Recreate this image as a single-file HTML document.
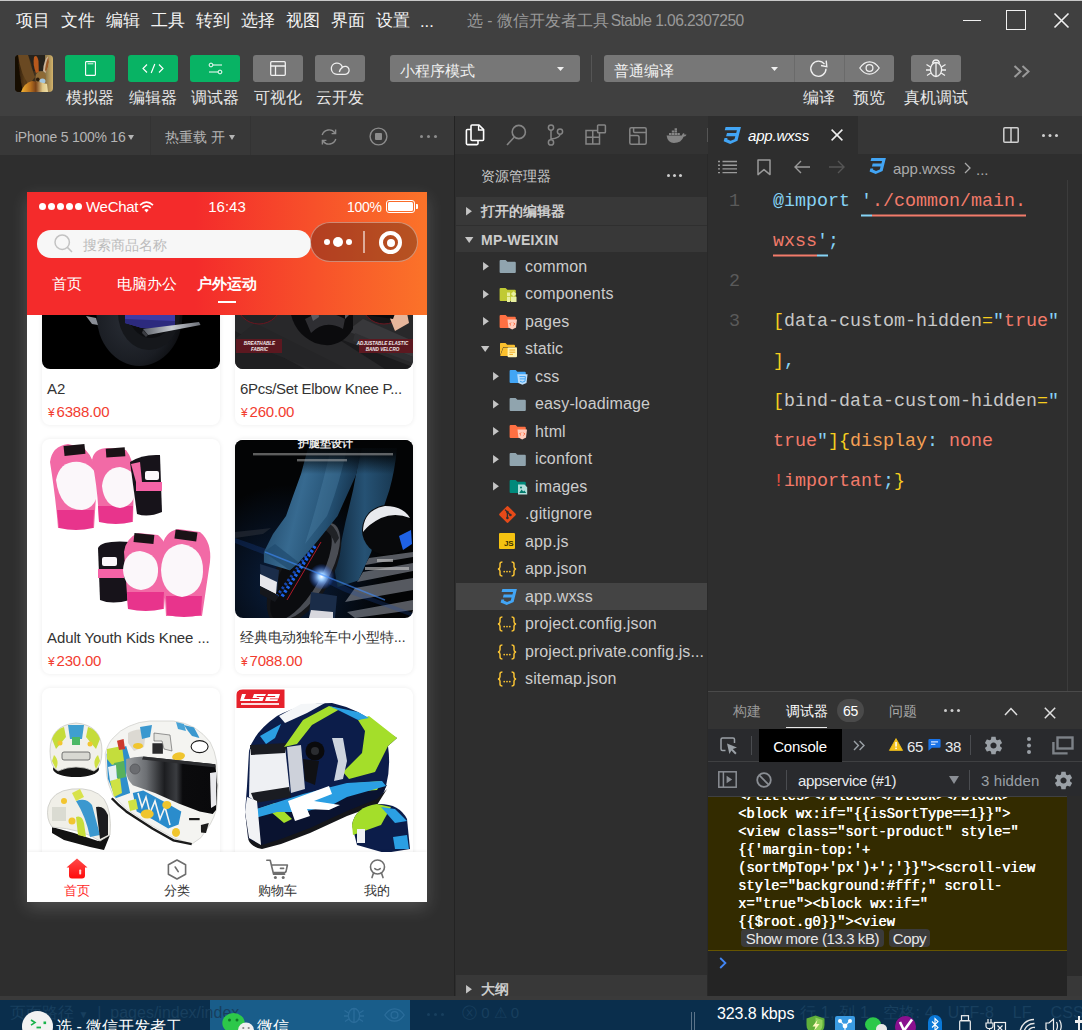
<!DOCTYPE html>
<html lang="zh">
<head>
<meta charset="utf-8">
<title>微信开发者工具</title>
<style>
*{box-sizing:border-box;margin:0;padding:0}
html,body{width:1082px;height:1030px;overflow:hidden;background:#2e2e2e}
body{font-family:"Liberation Sans",sans-serif;color:#ccc;position:relative;font-size:15px}
.a{position:absolute;white-space:nowrap}
.c{position:absolute;white-space:nowrap;transform:translate(-50%,-50%)}
.v{position:absolute;white-space:nowrap;transform:translateY(-50%)}
svg{display:block;overflow:visible}
/* top */
#top{left:0;top:0;width:1082px;height:116px;background:#404040}
#topline{left:0;top:0;width:1082px;height:1px;background:#c8c8c8}
.menu{font-size:16.5px;color:#f4f4f4;top:21px}
.tbtn{top:55px;width:50px;height:27px;border-radius:3px;background:#08b364}
.tbtn.g{background:#777}
.tlab{top:98px;font-size:15.5px;color:#e8e8e8}
.dd{top:55px;height:27px;background:#777;border-radius:3px}
/* sim */
#simbar{left:0;top:116px;width:454px;height:39px;background:#383838}
#simbg{left:0;top:155px;width:454px;height:845px;background:#2e2e2e}
#vline{left:454px;top:116px;width:1px;height:884px;background:#232323}
/* explorer */
#actbar{left:455px;top:116px;width:253px;height:38px;background:#333}
#expl{left:455px;top:154px;width:253px;height:846px;background:#2e2e2e}
.sec{left:456px;width:251px;height:27px;background:#383838}
.row{left:456px;width:251px;height:27px}
.fn{font-size:16px;color:#ccc;letter-spacing:.15px}
.bold{font-weight:bold;font-size:14px;color:#ccc}
/* editor */
#tabs{left:708px;top:116px;width:374px;height:38px;background:#363636}
#tab1{left:708px;top:116px;width:150px;height:38px;background:#2e2e2e}
#edit{left:708px;top:154px;width:374px;height:538px;background:#2e2e2e}
.code{font-family:"Liberation Mono",monospace;font-size:18.33px;left:773px;color:#c8c8c8;letter-spacing:0}
.ln{font-family:"Liberation Mono",monospace;font-size:18.33px;color:#5a5a5a;left:729px}
.b{color:#86d3f5}.s{color:#f27b6a}.y{color:#f6cd1e}.o{color:#f5a155}.r{color:#e4503f}
.u{border-bottom:2px solid #f27b6a;padding-bottom:3px}
.ub{border-bottom:2px solid #86d3f5;padding-bottom:3px}
/* debugger */
#dbg{left:708px;top:691px;width:374px;height:305px;background:#333;border-top:1px solid #4a4a4a}
#dt1{left:708px;top:729px;width:374px;height:33px;background:#292a2d;border-bottom:1px solid #3f4042}
#dt2{left:708px;top:762px;width:374px;height:34.7px;background:#292a2d;border-bottom:1px solid #3f4042}
#cons{left:708px;top:796.7px;width:359px;height:154.3px;background:#332b00;border-bottom:1px solid #665500;overflow:hidden}
#cons2{left:708px;top:951px;width:359px;height:45px;background:#242424}
#sb{left:1067px;top:796px;width:15px;height:200px;background:#2b2b2b}
.cl{font-family:"Liberation Mono",monospace;font-size:13.75px;color:#fff;left:30px;text-shadow:.45px 0 0 #fff}
/* taskbar */
#band{left:0;top:996px;width:1082px;height:4px;background:#3a3a3a}
#task{left:0;top:1000px;width:1082px;height:30px;background:#0a2e4c;overflow:hidden}
#taskact{left:210px;top:0;width:200px;height:30px;background:#195d8a}
.card{position:absolute;width:178px;height:234.5px;border-radius:8px;background:#fff;box-shadow:0 0 5px rgba(0,0,0,.08)}
.card svg{position:absolute;left:0;top:1px;border-radius:8px;overflow:hidden}
.ct{position:absolute;left:5px;top:198px;transform:translateY(-50%);font-size:15px;color:#333;white-space:nowrap;letter-spacing:-.1px}
.cp{position:absolute;left:6px;top:221px;transform:translateY(-50%);font-size:15px;color:#f23c2f;white-space:nowrap;letter-spacing:-.2px}
.cp i{font-style:normal;font-size:12px;margin-right:2px}
</style>
</head>
<body>
<!-- ============ TOP BAR ============ -->
<div class="a" id="top"></div>
<div class="a" id="topline"></div>
<div class="v menu" style="left:16px">项目</div>
<div class="v menu" style="left:61px">文件</div>
<div class="v menu" style="left:106px">编辑</div>
<div class="v menu" style="left:151px">工具</div>
<div class="v menu" style="left:196px">转到</div>
<div class="v menu" style="left:241px">选择</div>
<div class="v menu" style="left:286px">视图</div>
<div class="v menu" style="left:331px">界面</div>
<div class="v menu" style="left:376px">设置</div>
<div class="v menu" style="left:420px">...</div>
<div class="v" style="left:467px;top:21px;font-size:15.600px;color:#999">选 - 微信开发者工具 <span style="letter-spacing:-.58px;margin-left:-2.5px">Stable 1.06.2307250</span></div>
<!-- window controls -->
<div class="a" style="left:963px;top:19.500px;width:18px;height:1.500px;background:#f0f0f0"></div>
<div class="a" style="left:1006px;top:10px;width:20px;height:20px;border:1.600px solid #f0f0f0"></div>
<svg class="a" style="left:1054px;top:13px" width="15" height="15" viewBox="0 0 15 15"><path d="M0.5 0.5L14.5 14.5M14.5 0.5L0.5 14.5" stroke="#f0f0f0" stroke-width="1.6" fill="none"/></svg>

<!-- ============ TOOLBAR ============ -->
<!-- avatar -->
<svg class="a" style="left:15px;top:55px;border-radius:4px;overflow:hidden" width="38" height="37" viewBox="0 0 38 37">
<defs><linearGradient id="avg" x1="0" y1="0" x2="1" y2="0"><stop offset="0" stop-color="#1a0f06"/><stop offset=".25" stop-color="#5a3c18"/><stop offset=".5" stop-color="#3a2c1c"/><stop offset=".8" stop-color="#8a7448"/><stop offset="1" stop-color="#d4b46c"/></linearGradient>
<linearGradient id="avb" x1="0" y1="0" x2="1" y2="0"><stop offset="0" stop-color="#f2b232"/><stop offset=".35" stop-color="#b87020"/><stop offset=".55" stop-color="#7a4218"/><stop offset=".8" stop-color="#e0c888"/><stop offset="1" stop-color="#f0e0a8"/></linearGradient>
<filter id="avf"><feGaussianBlur stdDeviation=".7"/></filter></defs>
<rect width="38" height="37" fill="url(#avg)"/>
<g filter="url(#avf)">
<path d="M13 0H30V16H18Q17 8 13 0Z" fill="#26221f"/>
<path d="M3 0H13Q16 12 20 22L14 30Q6 20 3 0Z" fill="#6a4a22"/>
<path d="M0 0H3Q4 20 8 37H0Z" fill="#160c04"/>
<path d="M19 2Q22 -1 23.500 6L23.800 17L21 18Q17.500 10 19 2Z" fill="#b8581a"/>
<path d="M28 16Q29 4 33 1.500Q35 6 33 12L30.500 18Z" fill="#cbb498"/>
<path d="M30 15Q31 6 33.500 2Q34.500 6 33 12L31 17Z" fill="#9a5a28"/>
<path d="M20.500 22Q21 16.500 26 16.500Q31 17 31 23L30.500 29H21Z" fill="#8e6a36"/>
<ellipse cx="22.800" cy="24.500" rx="1.800" ry="2" fill="#2a1a0c"/>
<ellipse cx="27.500" cy="26" rx="3" ry="2.600" fill="#a4c6de"/>
<path d="M6 37Q9 28 17 26Q26 27 32 29L33 37Z" fill="url(#avb)"/>
</g></svg>
<!-- green buttons -->
<div class="a tbtn" style="left:65px"></div>
<div class="a tbtn" style="left:128px"></div>
<div class="a tbtn" style="left:190px"></div>
<div class="a tbtn g" style="left:253px"></div>
<div class="a tbtn g" style="left:315px"></div>
<!-- phone icon -->
<svg class="a" style="left:85px;top:61px" width="11" height="15" viewBox="0 0 11 15"><rect x=".6" y=".6" width="9.8" height="13.8" rx=".6" fill="none" stroke="#fff" stroke-width="1.1"/><path d="M2.600 2.800H8.400" stroke="#fff" stroke-width=".9"/></svg>
<!-- code icon -->
<svg class="a" style="left:142px;top:63px" width="22" height="11" viewBox="0 0 22 11"><path d="M5 1.5L1 5.5L5 9.5M17 1.5L21 5.5L17 9.5M12.8 1L9.2 10" stroke="#fff" stroke-width="1.15" fill="none"/></svg>
<!-- sliders icon -->
<svg class="a" style="left:208px;top:62px" width="15" height="13" viewBox="0 0 15 13"><circle cx="3" cy="3" r="1.900" fill="none" stroke="#fff" stroke-width="1"/><path d="M5 3H14" stroke="#fff" stroke-width="1"/><circle cx="12" cy="10" r="1.900" fill="none" stroke="#fff" stroke-width="1"/><path d="M1 10H10" stroke="#fff" stroke-width="1"/></svg>
<!-- layout icon -->
<svg class="a" style="left:270px;top:61px" width="16" height="15" viewBox="0 0 16 15"><rect x=".7" y=".7" width="14.6" height="13.6" rx="1" fill="none" stroke="#f0f0f0" stroke-width="1.3"/><path d="M1 5H15M5.5 5V14" stroke="#f0f0f0" stroke-width="1.3"/></svg>
<!-- cloud icon -->
<svg class="a" style="left:330px;top:62px" width="20" height="14" viewBox="0 0 20 14"><path d="M7 12.3A5.6 5.6 0 1 1 12.4 5.4A4 4 0 1 1 14.8 12.3Z" fill="none" stroke="#f0f0f0" stroke-width="1.3" stroke-linejoin="round" transform="translate(0,0)"/><path d="M12.4 5.4Q10 7 9.3 10" fill="none" stroke="#f0f0f0" stroke-width="1.3"/></svg>
<!-- labels -->
<div class="c tlab" style="left:90px">模拟器</div>
<div class="c tlab" style="left:153px">编辑器</div>
<div class="c tlab" style="left:215px">调试器</div>
<div class="c tlab" style="left:278px">可视化</div>
<div class="c tlab" style="left:340px">云开发</div>
<!-- dropdown 1 -->
<div class="a dd" style="left:390px;width:190px"></div>
<div class="v" style="left:400px;top:71px;font-size:15px;color:#f0f0f0">小程序模式</div>
<svg class="a" style="left:557px;top:66.500px" width="7" height="4" viewBox="0 0 9 5"><path d="M0 0H9L4.5 5Z" fill="#f0f0f0"/></svg>
<div class="a" style="left:591px;top:55px;width:1px;height:27px;background:#555"></div>
<!-- dropdown 2 + compile/preview -->
<div class="a dd" style="left:604px;width:290px"></div>
<div class="a" style="left:794px;top:55px;width:1px;height:27px;background:#6a6a6a"></div>
<div class="a" style="left:844px;top:55px;width:1px;height:27px;background:#6a6a6a"></div>
<div class="v" style="left:614px;top:71px;font-size:15px;color:#f0f0f0">普通编译</div>
<svg class="a" style="left:771px;top:66.500px" width="7" height="4" viewBox="0 0 9 5"><path d="M0 0H9L4.5 5Z" fill="#f0f0f0"/></svg>
<!-- refresh -->
<svg class="a" style="left:809px;top:59px" width="20" height="19" viewBox="0 0 20 19"><path d="M15.5 5.2A7.6 7.6 0 1 0 17 9.8" fill="none" stroke="#f0f0f0" stroke-width="1.4"/><path d="M12 6.5L17.8 7.6L17.2 1.6" fill="none" stroke="#f0f0f0" stroke-width="1.4"/></svg>
<!-- eye -->
<svg class="a" style="left:859px;top:61px" width="21" height="14" viewBox="0 0 21 14"><path d="M.8 7Q5 .8 10.5 .8T20.2 7Q16 13.2 10.5 13.2T.8 7Z" fill="none" stroke="#f0f0f0" stroke-width="1.3"/><circle cx="10.5" cy="7" r="3.4" fill="none" stroke="#f0f0f0" stroke-width="1.3"/></svg>
<!-- bug -->
<div class="a tbtn g" style="left:911px"></div>
<svg class="a" style="left:925px;top:59px" width="22" height="19" viewBox="0 0 22 19"><ellipse cx="11" cy="10.5" rx="5.6" ry="7" fill="none" stroke="#f0f0f0" stroke-width="1.3"/><path d="M11 3.5V17.5M7.5 4.5Q8 1 11 1T14.5 4.5M5.5 8L1.5 5.5M5.4 11H1M5.8 14L2 16.5M16.5 8L20.5 5.5M16.6 11H21M16.2 14L20 16.5" fill="none" stroke="#f0f0f0" stroke-width="1.3"/></svg>
<div class="c tlab" style="left:819px">编译</div>
<div class="c tlab" style="left:869px">预览</div>
<div class="c tlab" style="left:936px">真机调试</div>
<svg class="a" style="left:1013px;top:65px" width="18" height="13" viewBox="0 0 18 13"><path d="M1.5 1L7.5 6.5L1.5 12M9.5 1L15.5 6.5L9.5 12" fill="none" stroke="#9a9a9a" stroke-width="2"/></svg>


<!-- ============ SIM BAR ============ -->
<div class="a" id="simbar"></div>
<div class="a" id="simbg"></div>
<div class="a" id="vline"></div>
<div class="a" style="left:150px;top:116px;width:1px;height:39px;background:#333"></div>
<div class="a" style="left:250px;top:116px;width:1px;height:39px;background:#333"></div>
<div class="v" style="left:15px;top:137px;font-size:14px;color:#b4b4b4;letter-spacing:-.25px">iPhone 5 100% 16</div>
<svg class="a" style="left:128px;top:134.500px" width="6" height="5" viewBox="0 0 6 5"><path d="M0 0H6L3 5Z" fill="#b4b4b4"/></svg>
<div class="v" style="left:165px;top:138px;font-size:14px;color:#b4b4b4">热重载 开</div>
<svg class="a" style="left:229px;top:134.500px" width="6" height="5" viewBox="0 0 6 5"><path d="M0 0H6L3 5Z" fill="#b4b4b4"/></svg>
<!-- refresh -->
<svg class="a" style="left:320px;top:128px" width="18" height="18" viewBox="0 0 18 18"><path d="M2.2 7A7.2 7.2 0 0 1 15 5M15.8 11A7.2 7.2 0 0 1 3 13" fill="none" stroke="#8c8c8c" stroke-width="1.4"/><path d="M15.6 1.5V5.6H11.6M2.4 16.5V12.4H6.4" fill="none" stroke="#8c8c8c" stroke-width="1.4"/></svg>
<!-- stop -->
<svg class="a" style="left:369px;top:127px" width="19" height="19" viewBox="0 0 19 19"><circle cx="9.5" cy="9.5" r="8.4" fill="none" stroke="#8c8c8c" stroke-width="1.4"/><rect x="6" y="6" width="7" height="7" rx="1" fill="#8c8c8c"/></svg>
<div class="a" style="left:420px;top:135px;width:3px;height:3px;border-radius:2px;background:#8c8c8c;box-shadow:7px 0 0 #8c8c8c,14px 0 0 #8c8c8c"></div>


<!-- ============ PHONE ============ -->
<div class="a" id="phone" style="left:27px;top:192px;width:400px;height:710px;background:#fff;overflow:hidden;box-shadow:0 6px 16px rgba(255,255,255,.17)">
<!-- product cards (under header) -->
<!-- card 1 : A2 unicycle -->
<div class="card" style="left:15px;top:-2px">
<svg width="178" height="178" viewBox="0 0 178 178"><defs>
<radialGradient id="w1" cx=".4" cy=".55" r=".6"><stop offset="0" stop-color="#2a2e36"/><stop offset=".7" stop-color="#1a1d23"/><stop offset="1" stop-color="#0c0d10"/></radialGradient>
<linearGradient id="pd" x1="0" y1="0" x2="1" y2="0"><stop offset="0" stop-color="#5a5e66"/><stop offset=".5" stop-color="#c8ccd2"/><stop offset="1" stop-color="#6a6e76"/></linearGradient></defs>
<rect width="178" height="178" fill="#000"/>
<ellipse cx="97.500" cy="124" rx="43" ry="51" fill="url(#w1)"/>
<ellipse cx="107" cy="122" rx="31" ry="37" fill="#15171b"/>
<ellipse cx="109" cy="120" rx="23" ry="27" fill="#0d0e11"/>
<ellipse cx="110" cy="118" rx="18" ry="21" fill="#1b1d22"/>
<path d="M83 60H133V134Q120 138 100 137L83 132Z" fill="#3e3ba6"/>
<path d="M83 128L133 130V134Q120 138 100 137L83 132Z" fill="#2c2a7e"/>
<path d="M101 138L157 131L158.500 134L106 144Z" fill="url(#pd)"/>
<path d="M101 139L106 144L104 146L100 142Z" fill="#3a3c42"/>
<path d="M44 125L54 127L56 134L50 133Z" fill="#8a8e96"/>
</svg>
<div class="ct">A2</div><div class="cp"><i>¥</i>6388.00</div></div>
<!-- card 2 : pads dark -->
<div class="card" style="left:208px;top:-2px">
<svg width="178" height="178" viewBox="0 0 178 178"><rect width="178" height="178" fill="#28282a"/>
<path d="M0 140L70 178H0Z" fill="#1f1f21"/><path d="M20 132L112 178H78L0 148Z" fill="#252527"/>
<path d="M100 146L178 176V178H150Z" fill="#1b1b1d"/><path d="M112 140L178 166V150L128 128Z" fill="#38383b"/>
<path d="M118 150L178 172V166L120 142Z" fill="#2f2f32"/>
<circle cx="24" cy="110" r="23" fill="#222224" stroke="#6a1620" stroke-width="1"/>
<path d="M8 100Q24 92 40 100L36 112Q24 106 12 112Z" fill="#4a4a4e"/>
<circle cx="149" cy="110" r="23" fill="#141416" stroke="#6a1620" stroke-width="1"/>
<path d="M152 120L170 112L174 132L160 140Z" fill="#e6b69c"/>
<path d="M130 108L164 112L158 128L132 124Z" fill="#0a0a0c"/>
<path d="M55 90H118V138Q104 160 80 152Q58 142 55 118Z" fill="#0b0b0d"/>
<path d="M70 128Q90 116 110 128L108 138Q90 128 76 142Z" fill="#2e2e32"/>
<path d="M74 118L82 112L84 126L78 130Z" fill="#5a5a60"/><path d="M110 112L114 124L110 128Z" fill="#5a5a60"/>
<rect x="1" y="148" width="46" height="14" fill="#5c1820"/><text x="24.500" y="154.200" text-anchor="middle" font-family="Liberation Sans, sans-serif" font-size="4.600" font-weight="bold" font-style="italic" fill="#f2ecec">BREATHABLE</text><text x="24.500" y="159.800" text-anchor="middle" font-family="Liberation Sans, sans-serif" font-size="4.600" font-weight="bold" font-style="italic" fill="#f2ecec">FABRIC</text>
<rect x="124" y="148" width="54" height="14" fill="#5c1820"/><text x="147.500" y="154.200" text-anchor="middle" font-family="Liberation Sans, sans-serif" font-size="4.600" font-weight="bold" font-style="italic" fill="#f2ecec">ADJUSTABLE ELASTIC</text><text x="147.500" y="159.800" text-anchor="middle" font-family="Liberation Sans, sans-serif" font-size="4.600" font-weight="bold" font-style="italic" fill="#f2ecec">BAND VELCRO</text>
</svg>
<div class="ct" style="letter-spacing:-.3px">6Pcs/Set Elbow Knee P...</div><div class="cp"><i>¥</i>260.00</div></div>
<!-- card 3 : pink pads -->
<div class="card" style="left:15px;top:247px">
<svg width="178" height="178" viewBox="0 0 178 178"><rect width="178" height="178" fill="#fff"/>
<g>
<!-- top row -->
<path d="M8 22Q10 6 26 4L42 8Q54 20 55 40L52 88H16Q14 60 8 22Z" fill="#f26aa6"/>
<path d="M15 70H52L51 88Q34 92 17 88Z" fill="#e8348c"/>
<rect x="22" y="5" width="21" height="10" fill="#1a1216" transform="rotate(-6 32 10)"/>
<path d="M14 40Q18 20 38 22Q56 26 56 46Q56 68 40 70Q18 70 14 40Z" fill="#fbf7fa"/>
<path d="M50 20Q52 8 66 8L84 10Q92 20 92 36L91 82H57Q56 50 50 20Z" fill="#f26aa6"/>
<path d="M56 66H91L90 82Q74 86 57 82Z" fill="#e8348c"/>
<rect x="64" y="8" width="19" height="9" fill="#1a1216" transform="rotate(-4 73 12)"/>
<path d="M60 46Q62 28 78 27Q95 30 94 48Q93 66 78 68Q62 66 60 46Z" fill="#fbf7fa"/>
<path d="M88 22Q100 14 118 15L120 72Q106 78 95 74Z" fill="#17131a"/>
<rect x="94" y="42" width="26" height="9" fill="#f562a6"/><rect x="103" y="31" width="14" height="9" rx="2" fill="#fbf7fa"/>
<path d="M89 24L98 22L100 42L94 42Z" fill="#f26aa6"/>
<!-- bottom row -->
<path d="M56 108Q60 100 88 102L88 160Q70 165 58 160Z" fill="#17131a"/>
<rect x="56" y="129" width="26" height="9" fill="#f562a6"/><rect x="60" y="117" width="15" height="9" rx="2" fill="#fbf7fa"/>
<path d="M82 112Q84 98 96 93L116 95Q127 104 126 122L122 169H86Q84 140 82 112Z" fill="#f26aa6"/>
<path d="M85 152H122L121 169Q104 173 86 169Z" fill="#e8348c"/>
<rect x="92" y="94" width="20" height="9" fill="#1a1216" transform="rotate(6 102 98)"/>
<path d="M81 130Q82 112 98 111Q117 114 116 132Q115 148 99 150Q82 148 81 130Z" fill="#fbf7fa"/>
<path d="M120 108Q122 92 136 89L158 92Q170 102 168 122L160 176H124Q122 140 120 108Z" fill="#f26aa6"/>
<path d="M124 156H160L159 175Q142 179 125 175Z" fill="#e8348c"/>
<rect x="133" y="91" width="22" height="9" fill="#1a1216" transform="rotate(8 144 95)"/>
<path d="M119 130Q120 106 140 104Q162 108 161 132Q160 154 140 157Q120 154 119 130Z" fill="#fbf7fa"/>
</g></svg>
<div class="ct">Adult Youth Kids Knee ...</div><div class="cp"><i>¥</i>230.00</div></div>
<!-- card 4 : jeans + wheel -->
<div class="card" style="left:208px;top:247px">
<svg width="178" height="178" viewBox="0 0 178 178">
<defs><linearGradient id="jn" x1="0" y1="0" x2="1" y2=".3"><stop offset="0" stop-color="#183a58"/><stop offset=".45" stop-color="#376a90"/><stop offset=".75" stop-color="#245072"/><stop offset="1" stop-color="#122c44"/></linearGradient>
<linearGradient id="jn2" x1="0" y1="0" x2="1" y2="0"><stop offset="0" stop-color="#10283e"/><stop offset=".5" stop-color="#265274"/><stop offset="1" stop-color="#17364f"/></linearGradient>
<linearGradient id="tf" x1="0" y1="0" x2="0" y2="1"><stop offset="0" stop-color="#030405"/><stop offset=".35" stop-color="#030405" stop-opacity=".92"/><stop offset="1" stop-color="#030405" stop-opacity="0"/></linearGradient><radialGradient id="gl"><stop offset="0" stop-color="#fff"/><stop offset=".25" stop-color="#9fd0ff"/><stop offset="1" stop-color="#1a5cff" stop-opacity="0"/></radialGradient>
<radialGradient id="gb" cx=".3" cy=".8" r=".55"><stop offset="0" stop-color="#0a1f3f"/><stop offset="1" stop-color="#030405"/></radialGradient></defs>
<rect width="178" height="178" fill="url(#gb)"/>
<!-- crosswalk -->
<path d="M134 118L178 112V117L130 125ZM128 132L178 123V131L122 142ZM120 148L178 138V150L110 162ZM112 172L178 160V170L120 178Z" fill="#8e929c" opacity=".6"/>
<path d="M0 92L36 88L28 94L0 98Z" fill="#2a2e38" opacity=".6"/>
<path d="M0 98L60 119L120 151L178 173V177L110 152L50 123L0 103Z" fill="#1a4aa8" opacity=".25"/>
<!-- back leg -->
<path d="M126 8H162Q160 30 154.400 50L141.400 88.800L136.300 112.100L123.300 140.600L102.600 147L97.400 117.300L105.200 106.900L110.400 82.300L118.100 50Z" fill="url(#jn2)"/>
<!-- wheel -->
<ellipse cx="69" cy="133" rx="27" ry="58" fill="#141518" transform="rotate(30 69 133)"/>
<ellipse cx="72" cy="131" rx="22" ry="54" fill="#4a4d54" transform="rotate(30 72 131)"/>
<ellipse cx="66" cy="134" rx="19" ry="52" fill="#0b0c0f" transform="rotate(30 66 134)"/>
<path d="M86 102L52 160" stroke="#b01828" stroke-width="1"/>
<path d="M80 106L46 158" stroke="#1e6cff" stroke-width="3.500" stroke-dasharray="2.600 2.200" opacity=".9"/>
<path d="M74 112L42 156" stroke="#1a58e0" stroke-width="3" stroke-dasharray="2.400 2.400" opacity=".75"/>
<path d="M90 82Q100 84 104 98L100 104Q96 92 86 88Z" fill="#202226"/>
<!-- front leg -->
<path d="M73 8H127L121 35L114.300 50L102.600 75.900L92.300 88.800L81.900 101.700L63.800 122.400L54.800 130.200L28.900 122.400V112L38 94L51 76L58 56L66 34Z" fill="url(#jn)"/>
<path d="M96 8H112Q104 46 92 76L70 104Q84 60 96 8Z" fill="#4f86ad" opacity=".35"/>
<path d="M28.900 112L54.800 130.200L63.800 122.400L40 104Z" fill="#1f4a6e" opacity=".7"/>
<!-- shoes -->
<path d="M25 124L44 130L42 152L26 146Z" fill="#1b2d4a"/>
<path d="M25 134L42 142L41 154L25 146Z" fill="#e6e6ea"/>
<path d="M25 146L44 156L40 162L25 154Z" fill="#15171c"/>
<path d="M76 152L102 156L100 178H74Z" fill="#1a2c48"/><path d="M76 170L98 172L98 178H74Z" fill="#d8d8de"/>
<!-- glow -->
<circle cx="86.500" cy="136.700" r="13" fill="url(#gl)"/>
<path d="M30 112L150 160" stroke="#3f8dff" stroke-width="1.400" opacity=".6"/>
<rect x="0" y="0" width="178" height="34" fill="url(#tf)"/>
<!-- inset circle -->
<circle cx="152" cy="90" r="25" fill="#08090b"/>
<path d="M128 92Q128 70 150 66Q168 66 175 78Q160 72 146 78Q134 84 128 92Z" fill="#e8eaee"/>
<path d="M164 96L176 90L177 104L168 110Z" fill="#1f62e6"/>
<!-- caption text -->
<text x="90.500" y="6.500" text-anchor="middle" font-family="Liberation Sans, sans-serif" font-size="11" font-weight="bold" fill="#ececec">护腿垫设计</text>
<rect x="18" y="13" width="140" height="2.400" fill="#b8b8b8" opacity=".5"/><rect x="62" y="19" width="50" height="2.400" fill="#b8b8b8" opacity=".5"/>
<rect x="142" y="119" width="16" height="3" fill="#ccc" opacity=".6"/><rect x="130" y="127" width="44" height="3" fill="#ccc" opacity=".6"/>
</svg>
<div class="ct" style="font-size:13.75px;letter-spacing:0;top:199px">经典电动独轮车中小型特...</div><div class="cp"><i>¥</i>7088.00</div></div>
<!-- card 5 : cartoon helmets -->
<div class="card" style="left:15px;top:496.3px">
<svg width="178" height="178" viewBox="0 0 178 178"><rect width="178" height="178" fill="#fff"/>
<!-- small helmet top-left -->
<ellipse cx="34" cy="80" rx="23" ry="8" fill="#141414"/>
<path d="M8 62Q8 36 34 34Q60 36 60 62Q60 78 52 82Q34 74 16 82Q8 78 8 62Z" fill="#f1f0ea" stroke="#c9c9c4" stroke-width=".8"/>
<path d="M10 50Q14 40 22 38L24 48L14 60ZM58 50Q54 40 46 38L44 48L54 60Z" fill="#c5dc3a"/>
<path d="M26 36H42L40 50H28Z" fill="#3f9fd0"/><path d="M30 48H38V56H30Z" fill="#4cb866"/>
<path d="M12 66Q18 72 14 80L10 72ZM56 66Q50 72 54 80L58 72Z" fill="#cfe043"/>
<rect x="20" y="63" width="28" height="8" rx="2" fill="#d8d8d2" stroke="#555" stroke-width=".8"/>
<circle cx="18" cy="54" r="2.5" fill="#f2c530"/><circle cx="48" cy="55" r="2.5" fill="#f2c530"/>
<!-- small helmet bottom-left -->
<path d="M10 138L32 144L56 152L68 146L62 161L48 158L22 151L10 144Z" fill="#121212"/>
<path d="M6 118Q10 102 30 100Q52 98 62 110Q70 122 68 146L58 152Q40 140 10 138Q4 130 6 118Z" fill="#f0efe8" stroke="#c9c9c4" stroke-width=".8"/>
<path d="M34 112Q44 108 50 116L58 146L48 148Q44 128 34 112Z" fill="#3b98cf"/>
<path d="M34 128Q40 126 42 134L44 148L36 146Z" fill="#c8de3a"/>
<path d="M30 104L38 100L42 108L34 112Z" fill="#d8e24a"/>
<path d="M54 118Q62 116 66 126L66 146L58 150Z" fill="#1c1c1e"/>
<circle cx="22" cy="112" r="3" fill="#f2c530"/><circle cx="30" cy="132" r="3.5" fill="#f2c530"/>
<rect x="10" y="118" width="14" height="14" fill="#d5d6cc" opacity=".8"/>
<!-- big helmet -->
<defs><linearGradient id="vs" x1="0" y1="0" x2="1" y2="0"><stop offset="0" stop-color="#9a9da0"/><stop offset=".22" stop-color="#6c6f73"/><stop offset=".42" stop-color="#1c1d20"/><stop offset=".55" stop-color="#3a3c40"/><stop offset=".62" stop-color="#0b0b0d"/><stop offset="1" stop-color="#09090b"/></linearGradient></defs>
<path d="M63.200 64.800Q66 54 71.100 49Q78 41 86.800 37.300Q97 32.500 107.800 32H131.400Q143 33.500 152.400 38.600Q162 45 168.100 53Q173 62 174.600 72.600L176 96.200L174.600 119.800Q172 129 168.100 135.500L158.900 148.700L149.700 155.200L131.400 148.700L107.800 135.500L84.200 119.800L71.100 106.700Q66 96 64.600 85.700Z" fill="#f4f4f1" stroke="#d2d2ce" stroke-width=".8"/>
<path d="M69.800 109.300Q76 116 84.200 122.400L110.400 139.500L131.400 151.300L149.700 155.200" fill="none" stroke="#1b1b1b" stroke-width="2.400"/>
<!-- left graphics -->
<path d="M64.600 64.800L84.200 56.900L88.100 70L84.200 85.700L88.100 104.100L73.700 109.300L65.900 89.700Z" fill="#2f8fcb"/>
<path d="M65 60L80 57L82 72L70 76L65 70Z" fill="#c4dd3c"/><path d="M68 92L78 88L80 104L72 108Z" fill="#cfe244"/><path d="M72 74L82 72L84 88L76 90Z" fill="#58b15c"/>
<path d="M75 51.700L81.600 50L83 60L77 61Z" fill="#cc3a2e"/>
<path d="M66 78L74 76L75 90L68 92Z" fill="#e8f0f4"/>
<!-- lower blue WWW -->
<path d="M90.800 104.100L101.300 101.500L120.900 112L139.300 122.400L136.600 135.500L126.200 139.500L110.400 130.300L94.700 122.400Z" fill="#2a8ccc"/>
<path d="M96 104L100 118L104 108L108 124L113 112L118 130L123 118L128 136" fill="none" stroke="#f4f4f1" stroke-width="1.600"/>
<path d="M86 112L94 110L96 120L88 122Z" fill="#cfe244"/>
<!-- top graphics -->
<path d="M86 44Q96 38 104 42L102 58L92 62L86 54Z" fill="#dcd9d2"/><path d="M98 38L110 36L108 48L100 50Z" fill="#3b98cf"/>
<path d="M110.400 54.300H120.900V64.800H110.400Z" fill="#2a2a2c"/><path d="M112 44L128 46L130 62L122 60L120 52L112 52Z" fill="#e4e4e0" stroke="#555" stroke-width=".6"/>
<path d="M141.900 36L152 38.600L157.600 49L150 47L146 42Z" fill="#3b98cf"/><path d="M134 33L142 35L144 42L136 40Z" fill="#49a3d6"/>
<ellipse cx="157.600" cy="57.600" rx="8.500" ry="6" fill="#fff" stroke="#1a1a1a" stroke-width="1.100"/>
<ellipse cx="136.600" cy="67.400" rx="6.500" ry="4" fill="#f0c52e" transform="rotate(-12 136.600 67.400)"/>
<ellipse cx="96" cy="56.900" rx="5" ry="3" fill="#f0c52e"/>
<ellipse cx="105.200" cy="125" rx="6.500" ry="4.500" fill="#f0c52e"/><ellipse cx="124.800" cy="115.900" rx="4.500" ry="4" fill="#f0c52e"/><ellipse cx="134" cy="143.400" rx="4" ry="4.500" fill="#f0c52e"/>
<!-- visor -->
<path d="M84.200 70Q92 67.600 101.300 67.400L173.300 75.300L175.300 96.200L174 121.100L170.700 125.100L157.600 122.400L136.600 114.600L113 104.100L90.800 96.200Q84.500 90 84.200 83.100Z" fill="url(#vs)"/>
<path d="M101.300 67.400L173.300 75.300L173.600 78.500L100 70.500Z" fill="#2c2d30"/>
<path d="M168 84L174.500 83L174 116L169 119Z" fill="#e9e9ec"/>
<circle cx="93" cy="80" r="5" fill="#6a6c70" stroke="#55575b" stroke-width=".8"/>
<rect x="147.100" y="129" width="10.500" height="2.200" fill="#1b1b1b"/><path d="M158.900 136L166.800 134L164 144L159 143.400Z" fill="#1b1b1b"/>
</svg>
</div>
<!-- card 6 : LS2 helmet -->
<div class="card" style="left:208px;top:496.3px">
<svg width="178" height="178" viewBox="0 0 178 178"><rect width="178" height="178" fill="#fff"/>
<!-- main helmet -->
<path d="M14 62Q18 44 42 27Q66 14 97 14Q124 20 142 36L162 49L153 57Q156 78 151 97Q148 108 142 112L112 123L75 140L46 151L27 156Q16 154 14 149L10 123L12 97Z" fill="#0c1d4a"/>
<path d="M10 123L142 98L152 96L142 114L112 125L75 142L46 153L27 158Q16 156 13 149Z" fill="#0a1330"/><path d="M152 100L142 116L112 127L75 144L46 155L27 160Q16 158 13 150L27 156L46 150L75 139L112 122L142 110Z" fill="#15161a"/>
<!-- visor opening -->
<path d="M15 60L50 57L55 104L20 112L14 108Z" fill="#eef0f3"/>
<path d="M15 56L52 54L50 64L16 66Z" fill="#1a1c22"/>
<path d="M16 104L54 98L56 108L20 114Z" fill="#1a1c22"/>
<!-- lime shapes -->
<path d="M49 58L68 31L94 17L105 20L77 36L62 55Z" fill="#a6df2c"/>
<path d="M123 31L134 27L162 49L153 57L140 83L114 90L108 83L127 64L130 42Z" fill="#a4de2a"/>
<path d="M121 94L147 92L142 101L114 103Z" fill="#a4de2a"/>
<path d="M20 121L40 114L57 130L49 134L36 123L22 127Z" fill="#a4de2a"/>
<!-- blue shapes -->
<path d="M94 17L123 23L134 29L123 31L105 22Z" fill="#2b9fe3"/>
<path d="M25 47L46 35L40 49L31 55Z" fill="#2b9fe3"/>
<path d="M18 121L68 105L112 94L147 92L151 97L112 108L97 116L68 123L42 123L20 129Z" fill="#2b9fe3"/>
<!-- white top + R -->
<path d="M44 27L66 15L90 14L72 24L50 34Z" fill="#f4f6f8"/>
<path d="M53 112L94 97L97 105L79 112L105 116L94 121L72 120L75 127L60 132Z" fill="#fff"/>
<path d="M97 49L108 49L112 72L108 90L99 92L103 72Z" fill="#cdd4de"/>
<!-- mechanism -->
<circle cx="80" cy="62" r="9.5" fill="#0a0a0c"/><circle cx="80" cy="62" r="4" fill="#2a2c30"/>
<path d="M68 70L84 72L80 96L70 92Z" fill="#101114"/>
<path d="M52 58L66 56L70 100L56 104Z" fill="#e2e5ea" opacity=".9"/>
<path d="M12 108L22 112L26 156L14 149L10 123Z" fill="#f2f3f5"/>
<!-- small helmet -->
<path d="M117 136Q120 118 142 115Q164 114 172 130L175 160L150 164L122 156Z" fill="#0c1d4a"/>
<path d="M117 136Q120 118 142 115L156 118L146 136L118 146Z" fill="#a4de2a"/>
<path d="M146 118L160 120L172 132L160 134Z" fill="#2b9fe3"/>
<path d="M122 140H130V154H122Z" fill="#f0f2f4"/><path d="M158 148L172 146L174 160L160 160Z" fill="#2b9fe3"/>
<!-- LS2 logo -->
<path d="M1.5 6Q1.5 .5 7 .5H49.5V19H1.5Z" fill="#e6212b"/>
<path d="M7 5H11L9 10H16L15 12H5ZM19 5H31L30 7H22L21.5 8H29L27.5 12H15.5L16.3 10H24L24.4 9H17.5ZM33 5H45L43.5 9.5H35L34.7 10.3H43L42.4 12H30L31.4 8H40L40.4 7H32.3Z" fill="#fff"/>
<rect x="6" y="14" width="38" height="2" fill="#fff" opacity=".85"/>
</svg>
</div>


<!-- header -->
<div class="a" style="left:0;top:0;width:400px;height:123px;background:linear-gradient(90deg,#f42b2b 0%,#f42b2b 42%,#f7512a 72%,#fb7329 100%)"></div>
<!-- status bar -->
<div class="a" style="left:12px;top:11px;width:7px;height:7px;border-radius:4px;background:#fff;box-shadow:9px 0 0 #fff,18px 0 0 #fff,27px 0 0 #fff,36px 0 0 #fff"></div>
<div class="v" style="left:59px;top:13.5px;font-size:15px;color:#fff;letter-spacing:-.3px">WeChat</div>
<svg class="a" style="left:112px;top:9px" width="15" height="12" viewBox="0 0 15 12"><path d="M1 4.2Q7.5 -1.8 14 4.2M3.3 6.8Q7.5 2.8 11.7 6.8" fill="none" stroke="#fff" stroke-width="1.7"/><path d="M5.3 9Q7.5 7 9.7 9L7.5 11.5Z" fill="#fff"/></svg>
<div class="c" style="left:200px;top:13.7px;font-size:15px;color:#fff">16:43</div>
<div class="v" style="left:320px;top:14.5px;font-size:14px;color:#fff;letter-spacing:-.3px">100%</div>
<div class="a" style="left:359px;top:8px;width:29px;height:13px;border:1.2px solid #fff;border-radius:3px"></div>
<div class="a" style="left:361px;top:10px;width:25px;height:9px;border-radius:1.5px;background:#fff"></div>
<div class="a" style="left:389px;top:12px;width:2px;height:5px;border-radius:0 1px 1px 0;background:#fff"></div>
<!-- search -->
<div class="a" style="left:10px;top:38px;width:274px;height:28px;border-radius:14px;background:#f7f7f7"></div>
<svg class="a" style="left:27px;top:42px" width="19" height="19" viewBox="0 0 19 19"><circle cx="8.2" cy="8.2" r="7.2" fill="none" stroke="#c2c2c2" stroke-width="1.5"/><path d="M13.4 13.4L18 18" stroke="#c2c2c2" stroke-width="1.5"/></svg>
<div class="v" style="left:56px;top:54px;font-size:13.75px;color:#bcbcbc">搜索商品名称</div>
<!-- capsule -->
<div class="a" style="left:283px;top:30px;width:108px;height:40px;border-radius:20px;background:rgba(60,30,20,.36);border:1px solid rgba(255,255,255,.38)"></div>
<div class="a" style="left:297px;top:47px;width:6px;height:6px;border-radius:3px;background:#fff"></div>
<div class="a" style="left:306px;top:45px;width:10px;height:10px;border-radius:5px;background:#fff"></div>
<div class="a" style="left:319px;top:47px;width:6px;height:6px;border-radius:3px;background:#fff"></div>
<div class="a" style="left:336px;top:39px;width:1.5px;height:22px;background:rgba(255,255,255,.55)"></div>
<div class="a" style="left:352px;top:39px;width:23px;height:23px;border-radius:12px;border:4px solid #fff"></div>
<div class="a" style="left:359.5px;top:46.5px;width:8px;height:8px;border-radius:4px;background:#fff"></div>
<!-- tabs -->
<div class="c" style="left:40px;top:92px;font-size:15px;color:#fff">首页</div>
<div class="c" style="left:120px;top:92px;font-size:15px;color:#fff">电脑办公</div>
<div class="c" style="left:200px;top:92px;font-size:15px;color:#fff;font-weight:bold">户外运动</div>
<div class="a" style="left:191px;top:109.200px;width:18px;height:1.600px;background:#fff"></div>
<!-- tabbar -->
<div class="a" style="left:0;top:660px;width:400px;height:50px;background:#fff;box-shadow:0 -1px 3px rgba(0,0,0,.06)"></div>
<!-- home icon -->
<svg class="a" style="left:39px;top:666px" width="22" height="21" viewBox="0 0 22 21"><defs><linearGradient id="hg" x1="0" y1="0" x2="0" y2="1"><stop offset="0" stop-color="#ff4a4a"/><stop offset="1" stop-color="#ff0c0c"/></linearGradient></defs><path d="M11 .5L21.5 9.5H19V17.5Q19 20.5 16 20.5H6Q3 20.5 3 17.5V9.5H.5Z" fill="url(#hg)"/><rect x="13.2" y="11.5" width="2" height="5" rx=".8" fill="#ffd6d6"/></svg>
<div class="c" style="left:50px;top:699px;font-size:13px;color:#ff2a2a">首页</div>
<!-- category icon -->
<svg class="a" style="left:140px;top:667px" width="20" height="21" viewBox="0 0 20 21"><path d="M10 1L18.6 5.8V15.2L10 20L1.4 15.2V5.8Z" fill="none" stroke="#6e6e6e" stroke-width="1.6" stroke-linejoin="round"/><path d="M8.2 8L11.2 12.6" stroke="#6e6e6e" stroke-width="1.6" stroke-linecap="round"/></svg>
<div class="c" style="left:150px;top:699px;font-size:13px;color:#333">分类</div>
<!-- cart icon -->
<svg class="a" style="left:239px;top:667px" width="23" height="21" viewBox="0 0 23 21"><path d="M.8 1.2H4.2L7.6 15.2H18.6M6 6H21.4L20 12.6Q19.7 13.6 18.6 13.6H7.4" fill="none" stroke="#6e6e6e" stroke-width="1.6" stroke-linejoin="round" stroke-linecap="round"/><path d="M14.5 9.4H17.6" stroke="#6e6e6e" stroke-width="1.6" stroke-linecap="round"/><circle cx="9.4" cy="18.6" r="1.5" fill="#6e6e6e"/><circle cx="17.2" cy="18.6" r="1.5" fill="#6e6e6e"/></svg>
<div class="c" style="left:250px;top:699px;font-size:13px;color:#333">购物车</div>
<!-- me icon -->
<svg class="a" style="left:341px;top:667px" width="19" height="21" viewBox="0 0 19 21"><circle cx="9.5" cy="8" r="7" fill="none" stroke="#6e6e6e" stroke-width="1.6"/><path d="M6.8 9.6Q9.5 12 12.2 9.6" fill="none" stroke="#6e6e6e" stroke-width="1.5" stroke-linecap="round"/><path d="M5.600 13.800L4 18.600M13.400 13.800L15 18.600" stroke="#6e6e6e" stroke-width="1.6" stroke-linecap="round"/></svg>
<div class="c" style="left:350px;top:699px;font-size:13px;color:#333">我的</div>

</div>


<!-- ============ EXPLORER ============ -->
<div class="a" id="actbar"></div>
<div class="a" id="expl"></div>
<!-- EXPLORER-BEGIN -->
<!-- activity bar icons -->
<svg class="a" style="left:465px;top:124px" width="20" height="22" viewBox="0 0 20 22"><path d="M7 1H14L18.6 5.6V15.5Q18.6 16.5 17.6 16.5H7Q6 16.5 6 15.5V2Q6 1 7 1Z" fill="none" stroke="#fff" stroke-width="1.6" stroke-linejoin="round"/><path d="M13.6 1.2V6H18.4" fill="none" stroke="#fff" stroke-width="1.4"/><path d="M6 5.5H2.4Q1.4 5.5 1.4 6.5V19.6Q1.4 20.6 2.4 20.6H12Q13 20.6 13 19.6V16.6" fill="none" stroke="#fff" stroke-width="1.6" stroke-linejoin="round"/></svg>
<svg class="a" style="left:506px;top:124px" width="21" height="22" viewBox="0 0 21 22"><circle cx="12.8" cy="8" r="6.6" fill="none" stroke="#858585" stroke-width="1.6"/><path d="M8.4 13L1 21" stroke="#858585" stroke-width="1.6"/></svg>
<svg class="a" style="left:547px;top:124px" width="17" height="22" viewBox="0 0 17 22"><circle cx="4" cy="3.6" r="2.6" fill="none" stroke="#858585" stroke-width="1.5"/><circle cx="4" cy="18.4" r="2.6" fill="none" stroke="#858585" stroke-width="1.5"/><circle cx="13" cy="7.6" r="2.6" fill="none" stroke="#858585" stroke-width="1.5"/><path d="M4 6.2V15.8M13 10.2Q13 14 4 15" fill="none" stroke="#858585" stroke-width="1.5"/></svg>
<svg class="a" style="left:585px;top:124px" width="22" height="22" viewBox="0 0 22 22"><path d="M1 6.5H14.5V20H1ZM7.75 6.5V20M1 13.25H14.5" fill="none" stroke="#858585" stroke-width="1.5"/><rect x="12.6" y="1" width="7.8" height="7.8" rx=".8" fill="#333" stroke="#858585" stroke-width="1.5"/></svg>
<svg class="a" style="left:629px;top:127px" width="18" height="18" viewBox="0 0 18 18"><rect x=".8" y=".8" width="16.4" height="16.4" rx="1.5" fill="none" stroke="#858585" stroke-width="1.5"/><path d="M1 8.5H8.2Q10 8.5 10 10.3V17M4.6 1V4.6Q4.6 5.6 5.6 5.6H17" fill="none" stroke="#858585" stroke-width="1.5"/></svg>
<svg class="a" style="left:666px;top:128px" width="21" height="16" viewBox="0 0 21 16"><path d="M.6 7.6H15.8Q16.4 5.4 18 5Q18.6 6 18.4 6.8Q19.6 6.2 20.6 6.8Q19.6 8.8 17.6 8.8Q15.4 15 8 15Q1.6 15 .6 7.6Z" fill="#858585"/><path d="M3 5H5.4V7H3ZM5.8 5H8.2V7H5.8ZM8.6 5H11V7H8.6ZM11.4 5H13.8V7H11.4ZM5.8 2.6H8.2V4.6H5.8ZM8.6 2.6H11V4.6H8.6ZM8.6 .2H11V2.2H8.6Z" fill="#858585"/></svg>
<div class="a" style="left:707px;top:128px;width:1px;height:14px;background:#555"></div>
<div class="v" style="left:481px;top:177px;font-size:14px;color:#ccc">资源管理器</div>
<div class="a" style="left:667px;top:174px;width:3px;height:3px;border-radius:2px;background:#ccc;box-shadow:6px 0 0 #ccc,12px 0 0 #ccc"></div>
<div class="a sec" style="top:197px;height:28px"></div>
<div class="a sec" style="top:225px;border-top:1px solid #2f2f2f"></div>
<svg class="a" style="left:466px;top:207.3px" width="6" height="8.4" viewBox="0 0 7 10"><path d="M0 0L7 5L0 10Z" fill="#c5c5c5"/></svg>
<div class="v bold" style="left:481px;top:212px">打开的编辑器</div>
<svg class="a" style="left:464.8px;top:236.5px" width="8.4" height="6" viewBox="0 0 10 7"><path d="M0 0H10L5 7Z" fill="#c5c5c5"/></svg>
<div class="v bold" style="left:481px;top:239.5px;letter-spacing:.25px">MP-WEIXIN</div>
<div class="a row" style="top:583px;background:#444"></div>
<svg class="a" style="left:483px;top:262.3px" width="6" height="8.4" viewBox="0 0 7 10"><path d="M0 0L7 5L0 10Z" fill="#c5c5c5"/></svg>
<svg class="a" style="left:499px;top:259.0px" width="19" height="16" viewBox="0 0 19 16"><path d="M1.6 1H6.6L8.4 2.8H15.8Q16.8 2.8 16.8 3.8V13Q16.8 14 15.8 14H1.6Q.6 14 .6 13V2Q.6 1 1.6 1Z" fill="#90a4ae"/></svg>
<div class="v fn" style="left:525px;top:266.5px;">common</div>
<svg class="a" style="left:483px;top:289.8px" width="6" height="8.4" viewBox="0 0 7 10"><path d="M0 0L7 5L0 10Z" fill="#c5c5c5"/></svg>
<svg class="a" style="left:499px;top:286.5px" width="19" height="16" viewBox="0 0 19 16"><path d="M1.6 1H6.6L8.4 2.8H15.8Q16.8 2.8 16.8 3.8V13Q16.8 14 15.8 14H1.6Q.6 14 .6 13V2Q.6 1 1.6 1Z" fill="#c0ca33"/><path d="M8 5.5H11V9H8ZM8 9.8H11V15H8ZM11.8 9.8H17.5V15H11.8ZM14.6 4.2L17.4 7L14.6 9.6L11.9 7Z" fill="#e8f0a0"/></svg>
<div class="v fn" style="left:525px;top:294.0px;">components</div>
<svg class="a" style="left:483px;top:317.3px" width="6" height="8.4" viewBox="0 0 7 10"><path d="M0 0L7 5L0 10Z" fill="#c5c5c5"/></svg>
<svg class="a" style="left:499px;top:314.0px" width="19" height="16" viewBox="0 0 19 16"><path d="M1.6 1H6.6L8.4 2.8H15.8Q16.8 2.8 16.8 3.8V13Q16.8 14 15.8 14H1.6Q.6 14 .6 13V2Q.6 1 1.6 1Z" fill="#ff7043"/><path d="M8.5 5.5H18L17 13.5L13.2 15.6L9.4 13.5Z" fill="#ffccbc"/><path d="M12 8.6L10.6 10L12 11.4M14.4 8.6L15.8 10L14.4 11.4" stroke="#ff5722" stroke-width=".9" fill="none"/></svg>
<div class="v fn" style="left:525px;top:321.5px;">pages</div>
<svg class="a" style="left:480.8px;top:346.0px" width="8.4" height="6" viewBox="0 0 10 7"><path d="M0 0H10L5 7Z" fill="#c5c5c5"/></svg>
<svg class="a" style="left:499px;top:341.5px" width="19" height="16" viewBox="0 0 19 16"><path d="M1.5 1H6.5L8.2 2.8H15Q16 2.8 16 3.8V5H4.2L1 13.5V2Q1 1 1.5 1Z" fill="#fbc02d"/><path d="M4.4 5.4H18L15 14H1.2Z" fill="#fbc02d"/><rect x="8.6" y="5.6" width="9.4" height="9.6" rx="1" fill="#fff3b0"/><path d="M10.4 8H16.2M10.4 10.2H16.2M10.4 12.4H14" stroke="#f0a010" stroke-width=".9"/></svg>
<div class="v fn" style="left:525px;top:349.0px;">static</div>
<svg class="a" style="left:493px;top:372.3px" width="6" height="8.4" viewBox="0 0 7 10"><path d="M0 0L7 5L0 10Z" fill="#c5c5c5"/></svg>
<svg class="a" style="left:509px;top:369.0px" width="19" height="16" viewBox="0 0 19 16"><path d="M1.6 1H6.6L8.4 2.8H15.8Q16.8 2.8 16.8 3.8V13Q16.8 14 15.8 14H1.6Q.6 14 .6 13V2Q.6 1 1.6 1Z" fill="#42a5f5"/><path d="M8.2 5.2H18.6L17.5 14L13.4 15.8L9.3 14Z" fill="#bbdefb"/><path d="M10.4 7.6H16.4L16 12.2L13.4 13.2L10.9 12.2M10.7 9.9H16" stroke="#42a5f5" stroke-width="1" fill="none"/></svg>
<div class="v fn" style="left:535px;top:376.5px;">css</div>
<svg class="a" style="left:493px;top:399.8px" width="6" height="8.4" viewBox="0 0 7 10"><path d="M0 0L7 5L0 10Z" fill="#c5c5c5"/></svg>
<svg class="a" style="left:509px;top:396.5px" width="19" height="16" viewBox="0 0 19 16"><path d="M1.6 1H6.6L8.4 2.8H15.8Q16.8 2.8 16.8 3.8V13Q16.8 14 15.8 14H1.6Q.6 14 .6 13V2Q.6 1 1.6 1Z" fill="#90a4ae"/></svg>
<div class="v fn" style="left:535px;top:404.0px;">easy-loadimage</div>
<svg class="a" style="left:493px;top:427.3px" width="6" height="8.4" viewBox="0 0 7 10"><path d="M0 0L7 5L0 10Z" fill="#c5c5c5"/></svg>
<svg class="a" style="left:509px;top:424.0px" width="19" height="16" viewBox="0 0 19 16"><path d="M1.6 1H6.6L8.4 2.8H15.8Q16.8 2.8 16.8 3.8V13Q16.8 14 15.8 14H1.6Q.6 14 .6 13V2Q.6 1 1.6 1Z" fill="#ff7043"/><path d="M8.5 5.5H18L17 13.5L13.2 15.6L9.4 13.5Z" fill="#ffccbc"/><path d="M12 8.6L10.6 10L12 11.4M14.4 8.6L15.8 10L14.4 11.4" stroke="#ff5722" stroke-width=".9" fill="none"/></svg>
<div class="v fn" style="left:535px;top:431.5px;">html</div>
<svg class="a" style="left:493px;top:454.8px" width="6" height="8.4" viewBox="0 0 7 10"><path d="M0 0L7 5L0 10Z" fill="#c5c5c5"/></svg>
<svg class="a" style="left:509px;top:451.5px" width="19" height="16" viewBox="0 0 19 16"><path d="M1.6 1H6.6L8.4 2.8H15.8Q16.8 2.8 16.8 3.8V13Q16.8 14 15.8 14H1.6Q.6 14 .6 13V2Q.6 1 1.6 1Z" fill="#90a4ae"/></svg>
<div class="v fn" style="left:535px;top:459.0px;">iconfont</div>
<svg class="a" style="left:493px;top:482.3px" width="6" height="8.4" viewBox="0 0 7 10"><path d="M0 0L7 5L0 10Z" fill="#c5c5c5"/></svg>
<svg class="a" style="left:509px;top:479.0px" width="19" height="16" viewBox="0 0 19 16"><path d="M1.6 1H6.6L8.4 2.8H15.8Q16.8 2.8 16.8 3.8V13Q16.8 14 15.8 14H1.6Q.6 14 .6 13V2Q.6 1 1.6 1Z" fill="#00897b"/><path d="M9 5.4H15.4L18.2 8.2V15.6H9Z" fill="#b2dfdb"/><path d="M10.2 14L12.6 10.6L14.2 12.6L15.4 11.4L17.2 14Z" fill="#00796b"/><circle cx="12" cy="8.6" r="1" fill="#00796b"/></svg>
<div class="v fn" style="left:535px;top:486.5px;">images</div>
<svg class="a" style="left:498px;top:504.5px" width="19" height="19" viewBox="0 0 19 19"><rect x="3.2" y="3.2" width="12.6" height="12.6" rx="1.5" fill="#e64a19" transform="rotate(45 9.5 9.5)"/><path d="M7 4.6L12.4 10M9.4 7V13" stroke="#2e2e2e" stroke-width="1.3"/><circle cx="9.4" cy="13" r="1.3" fill="#2e2e2e"/><circle cx="12.4" cy="10" r="1.3" fill="#2e2e2e"/><circle cx="9.4" cy="7" r="1.3" fill="#2e2e2e"/></svg>
<div class="v fn" style="left:525px;top:514.0px;">.gitignore</div>
<div class="a" style="left:499px;top:533.0px;width:16px;height:16px;background:#f5c211;border-radius:1px"></div><div class="a" style="left:504px;top:539.0px;font-size:8px;font-weight:bold;color:#3a3000;letter-spacing:-.3px">JS</div>
<div class="v fn" style="left:525px;top:541.5px;">app.js</div>
<svg class="a" style="left:497px;top:561.0px" width="20" height="16" viewBox="0 0 20 16"><path d="M5.4 1Q3 1 3 3V5.8Q3 7.6 1 8Q3 8.4 3 10.2V13Q3 15 5.4 15M14.6 1Q17 1 17 3V5.8Q17 7.6 19 8Q17 8.4 17 10.2V13Q17 15 14.6 15" fill="none" stroke="#f5c033" stroke-width="1.5"/><circle cx="7.2" cy="10.6" r=".9" fill="#f5c033"/><circle cx="10" cy="10.6" r=".9" fill="#f5c033"/><circle cx="12.8" cy="10.6" r=".9" fill="#f5c033"/></svg>
<div class="v fn" style="left:525px;top:569.0px;">app.json</div>
<svg class="a" style="left:499px;top:587.5px" width="17" height="18.0" viewBox="0 0 17 18"><path d="M2 1H16.5L14.6 14L8 17L1.6 14.4L2.1 11.4H4.9L4.7 12.6L8 13.9L11.6 12.5L12.1 9.6H3.4L3.9 6.6H12.6L13 4H1.5Z" fill="#42a5f5" transform="skewX(-6) translate(1.5 0)"/></svg>
<div class="v fn" style="left:525px;top:596.5px;">app.wxss</div>
<svg class="a" style="left:497px;top:616.0px" width="20" height="16" viewBox="0 0 20 16"><path d="M5.4 1Q3 1 3 3V5.8Q3 7.6 1 8Q3 8.4 3 10.2V13Q3 15 5.4 15M14.6 1Q17 1 17 3V5.8Q17 7.6 19 8Q17 8.4 17 10.2V13Q17 15 14.6 15" fill="none" stroke="#f5c033" stroke-width="1.5"/><circle cx="7.2" cy="10.6" r=".9" fill="#f5c033"/><circle cx="10" cy="10.6" r=".9" fill="#f5c033"/><circle cx="12.8" cy="10.6" r=".9" fill="#f5c033"/></svg>
<div class="v fn" style="left:525px;top:624.0px;">project.config.json</div>
<svg class="a" style="left:497px;top:643.5px" width="20" height="16" viewBox="0 0 20 16"><path d="M5.4 1Q3 1 3 3V5.8Q3 7.6 1 8Q3 8.4 3 10.2V13Q3 15 5.4 15M14.6 1Q17 1 17 3V5.8Q17 7.6 19 8Q17 8.4 17 10.2V13Q17 15 14.6 15" fill="none" stroke="#f5c033" stroke-width="1.5"/><circle cx="7.2" cy="10.6" r=".9" fill="#f5c033"/><circle cx="10" cy="10.6" r=".9" fill="#f5c033"/><circle cx="12.8" cy="10.6" r=".9" fill="#f5c033"/></svg>
<div class="v fn" style="left:525px;top:651.5px;letter-spacing:.07px">project.private.config.js...</div>
<svg class="a" style="left:497px;top:671.0px" width="20" height="16" viewBox="0 0 20 16"><path d="M5.4 1Q3 1 3 3V5.8Q3 7.6 1 8Q3 8.4 3 10.2V13Q3 15 5.4 15M14.6 1Q17 1 17 3V5.8Q17 7.6 19 8Q17 8.4 17 10.2V13Q17 15 14.6 15" fill="none" stroke="#f5c033" stroke-width="1.5"/><circle cx="7.2" cy="10.6" r=".9" fill="#f5c033"/><circle cx="10" cy="10.6" r=".9" fill="#f5c033"/><circle cx="12.8" cy="10.6" r=".9" fill="#f5c033"/></svg>
<div class="v fn" style="left:525px;top:679.0px;">sitemap.json</div>
<div class="a sec" style="top:975px;height:25px"></div>
<svg class="a" style="left:466px;top:984.8px" width="6" height="8.4" viewBox="0 0 7 10"><path d="M0 0L7 5L0 10Z" fill="#c5c5c5"/></svg>
<div class="v bold" style="left:481px;top:990px">大纲</div>
<!-- EXPLORER-END -->

<!-- ============ EDITOR ============ -->
<div class="a" id="tabs"></div>
<div class="a" id="tab1"></div>
<div class="a" id="edit"></div>
<!-- EDITOR-BEGIN -->
<svg class="a" style="left:722px;top:125.5px" width="18" height="19.1" viewBox="0 0 17 18"><path d="M2 1H16.5L14.6 14L8 17L1.6 14.4L2.1 11.4H4.9L4.7 12.6L8 13.9L11.6 12.5L12.1 9.6H3.4L3.9 6.6H12.6L13 4H1.5Z" fill="#42a5f5" transform="skewX(-6) translate(1.5 0)"/></svg>
<div class="v" style="left:748px;top:135px;font-size:15px;font-style:italic;color:#fff;letter-spacing:-.2px">app.wxss</div>
<svg class="a" style="left:831px;top:129px" width="12" height="12" viewBox="0 0 12 12"><path d="M.6 .6L11.4 11.4M11.4 .6L.6 11.4" stroke="#f0f0f0" stroke-width="1.5"/></svg>
<svg class="a" style="left:1003px;top:127px" width="16" height="16" viewBox="0 0 16 16"><rect x=".8" y=".8" width="14.4" height="14.4" rx="1" fill="none" stroke="#d0d0d0" stroke-width="1.5"/><path d="M8 1V15" stroke="#d0d0d0" stroke-width="1.5"/></svg>
<div class="a" style="left:1042px;top:134px;width:3px;height:3px;border-radius:2px;background:#d0d0d0;box-shadow:6.5px 0 0 #d0d0d0,13px 0 0 #d0d0d0"></div>
<svg class="a" style="left:718px;top:160px" width="19" height="14" viewBox="0 0 19 14"><path d="M4.5 1.5H19M4.5 5.2H19M4.5 8.9H19M4.5 12.6H19" stroke="#9a9a9a" stroke-width="1.4"/><path d="M0 1.5H2M0 5.2H2M0 8.9H2M0 12.6H2" stroke="#9a9a9a" stroke-width="1.4"/></svg>
<svg class="a" style="left:757px;top:159px" width="14" height="17" viewBox="0 0 14 17"><path d="M1 1H13V15.6L7 10.6L1 15.6Z" fill="none" stroke="#9a9a9a" stroke-width="1.5" stroke-linejoin="round"/></svg>
<svg class="a" style="left:794px;top:160px" width="16" height="14" viewBox="0 0 16 14"><path d="M7 1L1 7L7 13M1 7H16" fill="none" stroke="#9a9a9a" stroke-width="1.4"/></svg>
<svg class="a" style="left:829px;top:160px" width="16" height="14" viewBox="0 0 16 14"><path d="M9 1L15 7L9 13M15 7H0" fill="none" stroke="#555" stroke-width="1.4"/></svg>
<svg class="a" style="left:868px;top:157.0px" width="17" height="18.0" viewBox="0 0 17 18"><path d="M2 1H16.5L14.6 14L8 17L1.6 14.4L2.1 11.4H4.9L4.7 12.6L8 13.9L11.6 12.5L12.1 9.6H3.4L3.9 6.6H12.6L13 4H1.5Z" fill="#42a5f5" transform="skewX(-6) translate(1.5 0)"/></svg>
<div class="v" style="left:893px;top:168px;font-size:15px;color:#aaa;letter-spacing:-.05px">app.wxss</div>
<svg class="a" style="left:964px;top:162px" width="7" height="12" viewBox="0 0 7 12"><path d="M1 1L6 6L1 11" fill="none" stroke="#aaa" stroke-width="1.3"/></svg>
<div class="v" style="left:976px;top:169px;font-size:15px;color:#aaa">...</div>
<div class="a" style="left:1067px;top:180px;width:1px;height:511px;background:#3c3c3c"></div>
<div class="v ln" style="top:200.5px">1</div>
<div class="v code" style="top:200.5px"><span class="b">@import</span> <span class="ub b">'</span><span class="u s">./common/main.</span></div>
<div class="v code" style="top:240.5px"><span class="u s">wxss</span><span class="ub b">'</span><span class="b">;</span></div>
<div class="v ln" style="top:280.5px">2</div>
<div class="v ln" style="top:320.5px">3</div>
<div class="v code" style="top:320.5px"><span class="y">[</span>data-custom-hidden<span class="y">=</span><span class="b">"</span><span class="s">true</span><span class="b">"</span></div>
<div class="v code" style="top:360.5px"><span class="y">]</span><span class="b">,</span></div>
<div class="v code" style="top:400.5px"><span class="y">[</span>bind-data-custom-hidden<span class="y">=</span><span class="b">"</span></div>
<div class="v code" style="top:440.5px"><span class="s">true</span><span class="b">"</span><span class="y">]{</span><span class="o">display</span><span class="b">:</span> <span class="s">none</span></div>
<div class="v code" style="top:480.5px"><span class="r">!</span><span class="s">important</span><span class="b">;</span><span class="y">}</span></div>
<!-- EDITOR-END -->

<div class="a" style="left:707px;top:154px;width:1px;height:842px;background:#292929"></div>
<!-- ============ DEBUGGER ============ -->
<div class="a" id="dbg"></div>
<!-- DEBUGGER-BEGIN -->
<div class="c" style="left:747px;top:712px;font-size:14px;color:#9a9a9a">构建</div>
<div class="c" style="left:806.5px;top:712px;font-size:14px;color:#fff">调试器</div>
<div class="a" style="left:786px;top:727px;width:41px;height:1px;background:#e8e8e8"></div>
<div class="a" style="left:837px;top:699px;width:27px;height:23px;border-radius:12px;background:#4a4a4a"></div>
<div class="c" style="left:850.5px;top:710.5px;font-size:14px;color:#fff;letter-spacing:-.3px">65</div>
<div class="c" style="left:903px;top:712px;font-size:14px;color:#aaa">问题</div>
<div class="a" style="left:944px;top:709px;width:3px;height:3px;border-radius:2px;background:#ccc;box-shadow:6.5px 0 0 #ccc,13px 0 0 #ccc"></div>
<svg class="a" style="left:1004px;top:707px" width="14" height="9" viewBox="0 0 14 9"><path d="M1 8L7 1.5L13 8" fill="none" stroke="#e0e0e0" stroke-width="1.5"/></svg>
<svg class="a" style="left:1044px;top:707px" width="12" height="12" viewBox="0 0 12 12"><path d="M.8 .8L11.2 11.2M11.2 .8L.8 11.2" stroke="#e0e0e0" stroke-width="1.5"/></svg>
<div class="a" id="dt1"></div>
<svg class="a" style="left:720px;top:737px" width="18" height="18" viewBox="0 0 18 18"><path d="M14.5 6V2.5Q14.5 1 13 1H2.5Q1 1 1 2.5V12Q1 13.5 2.5 13.5H5.5" fill="none" stroke="#9aa0a6" stroke-width="1.5"/><path d="M7 6.5L17 10.4L12.8 12L16.6 16L15.2 17.4L11.4 13.4L9.4 17Z" fill="#9aa0a6"/></svg>
<div class="a" style="left:751px;top:736px;width:1px;height:19px;background:#4a4c50"></div>
<div class="a" style="left:759px;top:729px;width:83px;height:33px;background:#000"></div>
<div class="c" style="left:800px;top:746px;font-size:15px;color:#fff;letter-spacing:-.2px">Console</div>
<svg class="a" style="left:853px;top:740px" width="12" height="11" viewBox="0 0 12 11"><path d="M1 1L5.4 5.5L1 10M6.6 1L11 5.5L6.6 10" fill="none" stroke="#9aa0a6" stroke-width="1.4"/></svg>
<svg class="a" style="left:889px;top:738px" width="14" height="13" viewBox="0 0 14 13"><path d="M7 .6L13.6 12.4H.4Z" fill="#f4c21c" stroke="#f4c21c" stroke-width=".8" stroke-linejoin="round"/><rect x="6.3" y="4" width="1.5" height="4.6" fill="#fff"/><rect x="6.3" y="9.6" width="1.5" height="1.5" fill="#fff"/></svg>
<div class="v" style="left:907px;top:746px;font-size:15px;color:#e8eaed;letter-spacing:-.3px">65</div>
<svg class="a" style="left:928px;top:739px" width="13" height="12" viewBox="0 0 13 12"><path d="M1.5 0H11.5Q12.6 0 12.6 1.2V7.6Q12.6 8.8 11.5 8.8H4L.4 11.8V1.2Q.4 0 1.5 0Z" fill="#1a73e8"/><path d="M3 2.8H10M3 5.4H7.4" stroke="#cfe2ff" stroke-width="1.2"/></svg>
<div class="v" style="left:945px;top:746px;font-size:15px;color:#e8eaed;letter-spacing:-.3px">38</div>
<div class="a" style="left:970px;top:735px;width:1px;height:20px;background:#4a4c50"></div>
<svg class="a" style="left:983px;top:735px" width="21" height="21" viewBox="0 0 24 24"><path fill="#9aa0a6" d="M19.43 12.98c.04-.32.07-.64.07-.98s-.03-.66-.07-.98l2.11-1.65c.19-.15.24-.42.12-.64l-2-3.46c-.12-.22-.39-.3-.61-.22l-2.49 1c-.52-.4-1.08-.73-1.69-.98l-.38-2.65C14.46 2.18 14.25 2 14 2h-4c-.25 0-.46.18-.49.42l-.38 2.65c-.61.25-1.17.59-1.69.98l-2.49-1c-.23-.09-.49 0-.61.22l-2 3.46c-.13.22-.07.49.12.64l2.11 1.65c-.04.32-.07.65-.07.98s.03.66.07.98l-2.11 1.65c-.19.15-.24.42-.12.64l2 3.46c.12.22.39.3.61.22l2.49-1c.52.4 1.08.73 1.69.98l.38 2.65c.03.24.24.42.49.42h4c.25 0 .46-.18.49-.42l.38-2.65c.61-.25 1.17-.59 1.69-.98l2.49 1c.23.09.49 0 .61-.22l2-3.46c.12-.22.07-.49-.12-.64l-2.11-1.65zM12 15.5c-1.93 0-3.500-1.570-3.500-3.500s1.570-3.500 3.500-3.500 3.500 1.570 3.500 3.500-1.570 3.500-3.500 3.500z"/></svg>
<div class="a" style="left:1027px;top:737px;width:4px;height:4px;border-radius:2px;background:#9aa0a6;box-shadow:0 6.5px 0 #9aa0a6,0 13px 0 #9aa0a6"></div>
<svg class="a" style="left:1052px;top:736px" width="22" height="19" viewBox="0 0 22 19"><rect x="5.5" y="1.5" width="15" height="11" fill="none" stroke="#7d8288" stroke-width="2.4"/><path d="M1.4 6V17.4H15.6" fill="none" stroke="#7d8288" stroke-width="2.4"/></svg>
<div class="a" id="dt2"></div>
<svg class="a" style="left:718px;top:770.7px" width="19" height="17" viewBox="0 0 19 17"><rect x=".8" y=".8" width="17.4" height="15.4" fill="none" stroke="#8a8e94" stroke-width="1.5"/><path d="M5.4 1V16" stroke="#8a8e94" stroke-width="1.5"/><path d="M8.6 4.8L14.2 8.5L8.6 12.2Z" fill="#8a8e94"/></svg>
<svg class="a" style="left:756px;top:771.7px" width="16" height="16" viewBox="0 0 16 16"><circle cx="8" cy="8" r="6.8" fill="none" stroke="#8a8e94" stroke-width="1.8"/><path d="M3.2 3.2L12.8 12.8" stroke="#8a8e94" stroke-width="1.8"/></svg>
<div class="a" style="left:786px;top:769.7px;width:1px;height:20px;background:#4a4c50"></div>
<div class="v" style="left:798px;top:779.7px;font-size:15px;color:#e8eaed;letter-spacing:-.35px">appservice (#1)</div>
<svg class="a" style="left:949px;top:775.7px" width="10" height="8" viewBox="0 0 10 8"><path d="M0 0H10L5 8Z" fill="#8a8e94"/></svg>
<div class="a" style="left:969px;top:769.7px;width:1px;height:20px;background:#4a4c50"></div>
<div class="v" style="left:981px;top:779.7px;font-size:15px;color:#9aa0a6;letter-spacing:.1px">3 hidden</div>
<svg class="a" style="left:1053px;top:769.7px" width="21" height="21" viewBox="0 0 24 24"><path fill="#9aa0a6" d="M19.43 12.98c.04-.32.07-.64.07-.98s-.03-.66-.07-.98l2.11-1.65c.19-.15.24-.42.12-.64l-2-3.46c-.12-.22-.39-.3-.61-.22l-2.49 1c-.52-.4-1.08-.73-1.69-.98l-.38-2.65C14.46 2.18 14.25 2 14 2h-4c-.25 0-.46.18-.49.42l-.38 2.65c-.61.25-1.17.59-1.69.98l-2.49-1c-.23-.09-.49 0-.61.22l-2 3.46c-.13.22-.07.49.12.64l2.11 1.65c-.04.32-.07.65-.07.98s.03.66.07.98l-2.11 1.65c-.19.15-.24.42-.12.64l2 3.46c.12.22.39.3.61.22l2.49-1c.52.4 1.08.73 1.69.98l.38 2.65c.03.24.24.42.49.42h4c.25 0 .46-.18.49-.42l.38-2.65c.61-.25 1.17-.59 1.69-.98l2.49 1c.23.09.49 0 .61-.22l2-3.46c.12-.22.07-.49-.12-.64l-2.11-1.65zM12 15.5c-1.93 0-3.500-1.570-3.500-3.500s1.570-3.500 3.500-3.500 3.500 1.570 3.500 3.500-1.570 3.500-3.500 3.500z"/></svg>
<div class="a" id="cons">
<div class="v cl" style="top:-0.5px">&lt;/titles&gt;&lt;/block&gt;&lt;/block&gt;&lt;/block&gt;</div>
<div class="v cl" style="top:17.5px">&lt;block wx:if="{{isSortType==1}}"&gt;</div>
<div class="v cl" style="top:35.5px">&lt;view class="sort-product" style="</div>
<div class="v cl" style="top:53.5px">{{'margin-top:'+</div>
<div class="v cl" style="top:71.5px">(sortMpTop+'px')+';'}}"&gt;&lt;scroll-view</div>
<div class="v cl" style="top:89.5px">style="background:#fff;" scroll-</div>
<div class="v cl" style="top:107.5px">x="true"&gt;&lt;block wx:if="</div>
<div class="v cl" style="top:125.5px">{{$root.g0}}"&gt;&lt;view</div>
<div class="a" style="left:33px;top:132.800px;width:143px;height:18px;border-radius:4px;background:#3b3b3b"></div>
<div class="c" style="left:104.5px;top:141.600px;font-size:15px;color:#e8e8e8;letter-spacing:-.4px">Show more (13.3 kB)</div>
<div class="a" style="left:181px;top:132.800px;width:41px;height:18px;border-radius:4px;background:#3b3b3b"></div>
<div class="c" style="left:201.5px;top:141.600px;font-size:15px;color:#e8e8e8;letter-spacing:-.4px">Copy</div>
</div>
<div class="a" id="cons2"></div>
<svg class="a" style="left:719px;top:957px" width="8" height="12" viewBox="0 0 8 12"><path d="M1.2 1L6.4 6L1.2 11" fill="none" stroke="#4285f4" stroke-width="1.8"/></svg>
<div class="a" id="sb"></div>
<div class="a" style="left:1067px;top:976px;width:15px;height:20px;background:#383838"></div>
<!-- DEBUGGER-END -->

<!-- ============ TASKBAR ============ -->
<div class="a" id="band"></div>
<div class="a" id="task"><div class="a" id="taskact"></div>
<!-- TASKBAR-BEGIN -->
<div class="v" style="left:10px;top:13px;font-size:16px;color:#183f5e">页面路径 <span style="font-size:10px">▼</span> &nbsp;|&nbsp; pages/index/index</div>
<div class="v" style="left:800px;top:13px;font-size:16px;color:#183f5e;letter-spacing:.2px">行 1, 列 1 &nbsp;&nbsp;空格: 4 &nbsp;&nbsp;UTF-8 &nbsp;&nbsp;&nbsp;LF &nbsp;&nbsp;&nbsp;CSS</div>
<div class="v" style="left:462px;top:13px;font-size:15px;color:#183f5e">ⓧ 0 ⚠ 0</div>
<svg class="a" style="left:343px;top:5px" width="22" height="19" viewBox="0 0 22 19"><ellipse cx="11" cy="10.5" rx="5.6" ry="7" fill="none" stroke="#2b6d9b" stroke-width="1.3"/><path d="M11 3.5V17.5M5.5 8L1.5 5.5M5.4 11H1M5.8 14L2 16.5M16.5 8L20.5 5.500M16.6 11H21M16.2 14L20 16.500" fill="none" stroke="#2b6d9b" stroke-width="1.3"/></svg>
<svg class="a" style="left:384px;top:8px" width="21" height="14" viewBox="0 0 21 14"><path d="M.8 7Q5 .8 10.5 .8T20.2 7Q16 13.2 10.5 13.2T.8 7Z" fill="none" stroke="#2b6d9b" stroke-width="1.3"/><circle cx="10.5" cy="7" r="3.4" fill="none" stroke="#2b6d9b" stroke-width="1.3"/></svg>
<div class="a" style="left:427px;top:13px;width:3px;height:3px;border-radius:2px;background:#183f5e;box-shadow:7px 0 0 #183f5e,14px 0 0 #183f5e"></div>
<div class="a" style="left:22px;top:11px;width:31px;height:31px;border-radius:16px;background:#f2f2f2"></div>
<svg class="a" style="left:30px;top:19px" width="18" height="10" viewBox="0 0 18 10"><path d="M1 1L5 3.600L1 6.200" fill="none" stroke="#17b34a" stroke-width="1.6"/><path d="M6.500 8.500H11" stroke="#17b34a" stroke-width="1.8"/><rect x="13.500" y="2.500" width="2.600" height="2.600" fill="#17b34a"/></svg>
<div class="v" style="left:56px;top:27px;font-size:16px;color:#fff">选 - 微信开发者工...</div>
<svg class="a" style="left:222px;top:13px" width="32" height="22" viewBox="0 0 32 22"><ellipse cx="11.500" cy="10" rx="11.200" ry="10" fill="#2dc84a"/><circle cx="7.500" cy="7" r="1.500" fill="#0f7a27"/><circle cx="15" cy="7" r="1.500" fill="#0f7a27"/><ellipse cx="24" cy="17" rx="8" ry="7.500" fill="#f0f0f0"/><circle cx="21.300" cy="15" r="1.100" fill="#888"/><circle cx="26.700" cy="15" r="1.100" fill="#888"/></svg>
<div class="v" style="left:257px;top:27px;font-size:16px;color:#fff">微信</div>
<div class="a" style="left:691px;top:12px;width:1px;height:18px;background:#5b7389"></div><div class="a" style="left:694px;top:12px;width:1px;height:18px;background:#5b7389"></div>
<div class="v" style="left:717px;top:14px;font-size:16px;color:#fff;letter-spacing:-.1px">323.8 kbps</div>
<div class="v" style="left:717px;top:38.500px;font-size:16px;color:#fff">172.4 kbps</div>
<svg class="a" style="left:806px;top:15px" width="19" height="20" viewBox="0 0 19 20"><path d="M9.500 .500L18.500 3.500V10Q18.500 17 9.500 20Q.500 17 .500 10V3.500Z" fill="#5fae3a"/><path d="M9.500 2.500L16.500 5V10Q16.500 15.500 9.500 18Z" fill="#8fd05a"/><path d="M11.500 5L6.500 11.500H9.500L8 16L13.500 9H10.300Z" fill="#fff8c0"/></svg>
<div class="a" style="left:835px;top:16px;width:20px;height:20px;border-radius:2px;background:#3a9be3"></div>
<svg class="a" style="left:837px;top:18px" width="16" height="14" viewBox="0 0 16 14"><path d="M3 3L8 8L13 3M8 8V13" stroke="#e8f4ff" stroke-width="1.200" fill="none"/><circle cx="3" cy="3" r="2" fill="#fff"/><circle cx="13" cy="3" r="2" fill="#fff"/><circle cx="8" cy="8" r="2.400" fill="#fff"/></svg>
<svg class="a" style="left:865px;top:17px" width="22" height="16" viewBox="0 0 22 16"><ellipse cx="8" cy="7.500" rx="8" ry="7.200" fill="#2dc84a"/><ellipse cx="16.500" cy="12" rx="5.500" ry="5" fill="#e8e8e8"/></svg>
<div class="a" style="left:895px;top:16px;width:21px;height:21px;border-radius:11px;background:#8a108e"></div>
<svg class="a" style="left:899px;top:19px" width="14" height="12" viewBox="0 0 14 12"><path d="M1 3L5 11.500L13 .500" fill="none" stroke="#fff" stroke-width="2.600"/></svg>
<div class="a" style="left:928px;top:15px;width:14px;height:22px;border-radius:7px;background:#0a78d7"></div>
<svg class="a" style="left:931px;top:18px" width="8" height="13" viewBox="0 0 8 13"><path d="M1 3.500L7 9.500L4 12.500V.500L7 3.500L1 9.500" fill="none" stroke="#fff" stroke-width="1.100"/></svg>
<svg class="a" style="left:959px;top:15px" width="12" height="16" viewBox="0 0 12 16"><rect x="2.500" y=".700" width="7" height="5" fill="none" stroke="#f0f0f0" stroke-width="1.200"/><rect x=".700" y="5.700" width="10.600" height="12" rx="1" fill="none" stroke="#f0f0f0" stroke-width="1.200"/></svg>
<svg class="a" style="left:985px;top:18px" width="22" height="13" viewBox="0 0 22 13"><path d="M3 1V5M6 1V5M1 5H8V8Q8 10.500 4.500 10.500Q1 10.500 1 8ZM4.500 10.500V13" fill="none" stroke="#f0f0f0" stroke-width="1.200"/><rect x="9.500" y="4.500" width="11" height="9" fill="none" stroke="#f0f0f0" stroke-width="1.200"/><path d="M12.500 7.500L17.500 12.500M17.500 7.500L12.500 12.500" stroke="#f0f0f0" stroke-width="1.200"/></svg>
<svg class="a" style="left:1018px;top:18px" width="18" height="14" viewBox="0 0 18 14"><path d="M2 14A14 14 0 0 1 16 1.500M6 14A10 10 0 0 1 16.500 5.500M10 14A6 6 0 0 1 17 9.500" fill="none" stroke="#e8e8e8" stroke-width="1.400"/></svg>
<svg class="a" style="left:1045px;top:18px" width="20" height="14" viewBox="0 0 20 14"><path d="M1 5H4L8.500 1V14H4.500L1 11Z" fill="none" stroke="#f0f0f0" stroke-width="1.200"/><path d="M11.500 4Q13.500 8 11.500 12M14.500 2Q18 8 14.500 14" fill="none" stroke="#f0f0f0" stroke-width="1.200"/></svg>
<div class="a" style="left:1075px;top:20px;width:10px;height:3px;background:#f0f0f0"></div><div class="a" style="left:1078px;top:16px;width:2px;height:14px;background:#f0f0f0"></div>
<!-- TASKBAR-END -->
</div>
</body>
</html>
